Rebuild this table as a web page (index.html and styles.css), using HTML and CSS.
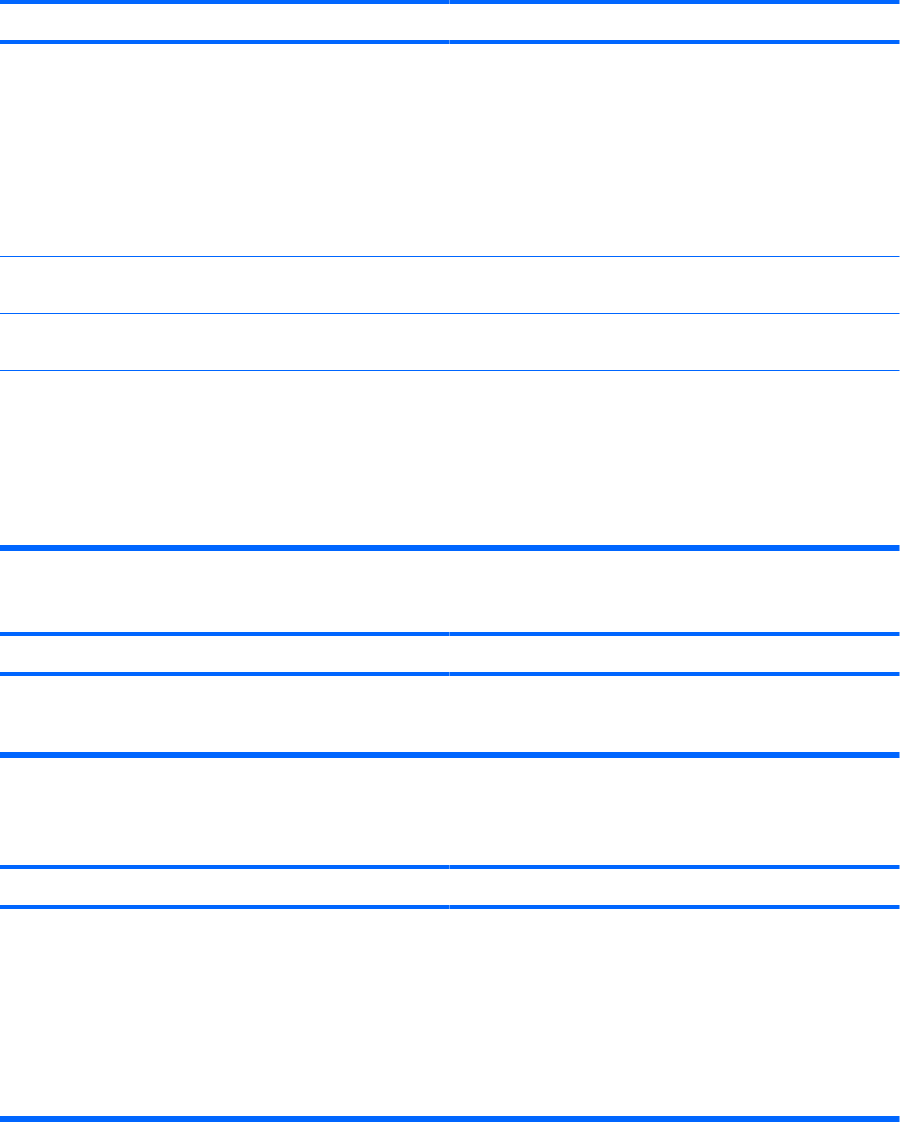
FILE: index.html
```html
<!DOCTYPE html>
<html>
<head>
<meta charset="utf-8">
<link rel="stylesheet" href="styles.css">
</head>
<body>
<div class="page">
  <div class="rule split r4"><span></span><i></i><span></span><i></i></div>
  <div class="gap h36"></div>
  <div class="rule split r4"><span></span><i></i><span></span><i></i></div>
  <div class="gap h212"></div>
  <div class="rule thin"></div>
  <div class="gap h56"></div>
  <div class="rule thin"></div>
  <div class="gap h56"></div>
  <div class="rule thin"></div>
  <div class="gap h174"></div>
  <div class="rule thick"></div>
  <div class="gap h81"></div>
  <div class="rule split r4"><span></span><i></i><span></span><i></i></div>
  <div class="gap h36"></div>
  <div class="rule split r4"><span></span><i></i><span></span><i></i></div>
  <div class="gap h76"></div>
  <div class="rule thick"></div>
  <div class="gap h107"></div>
  <div class="rule split r4"><span></span><i></i><span></span><i></i></div>
  <div class="gap h36"></div>
  <div class="rule split r4"><span></span><i></i><span></span><i></i></div>
  <div class="gap h207"></div>
  <div class="rule thick"></div>
</div>
</body>
</html>
```
FILE: styles.css
```css
html, body {
  margin: 0;
  padding: 0;
  background: #ffffff;
  font-family: "Liberation Sans", Arial, sans-serif;
}
.page {
  width: 900px;
  display: flex;
  flex-direction: column;
}
.rule {
  width: 899px;
  background: #0066ff;
  box-shadow: 1px 0 0 #7fb2ff;
}
.split {
  width: 900px;
  display: grid;
  grid-template-columns: 449px 1px 449px 1px;
  grid-template-rows: 4px;
  background: transparent;
  box-shadow: none;
}
.split span { background: #0066ff; }
.split i { background: #5c9dff; }
.split i:last-child { background: #7fb2ff; }
.r4 { height: 4px; }
.thin { height: 1px; }
.thick { height: 6px; }
.gap { width: 100%; }
.h36 { height: 36px; }
.h56 { height: 56px; }
.h76 { height: 76px; }
.h81 { height: 81px; }
.h107 { height: 107px; }
.h174 { height: 174px; }
.h207 { height: 207px; }
.h212 { height: 212px; }
```
